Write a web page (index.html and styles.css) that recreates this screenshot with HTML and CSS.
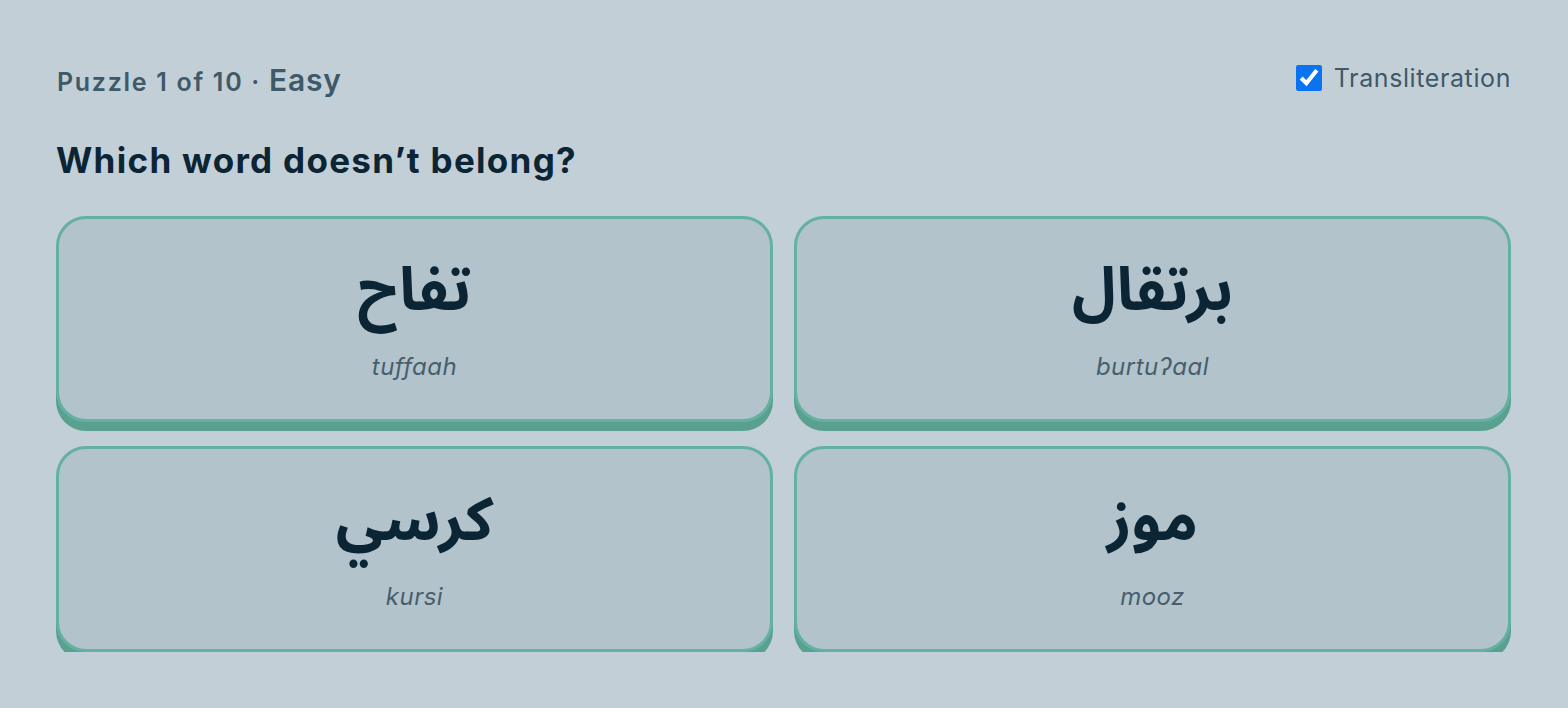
FILE: index.html
```html
<!DOCTYPE html>
<html>
    <head>
        <title>Odd one out</title>
        <link rel="stylesheet" href="styles.css">
    </head>
    <body>
        <div class="game">
            <div class="topbar">
                <div class="progress">Puzzle 1 of 10 · <span class="level">Easy</span></div>
                <label class="toggle">
                    <input type="checkbox" checked>
                    <span>Transliteration</span>
                </label>
            </div>
            <h1 class="question">Which word doesn’t belong?</h1>
            <div class="choices">
                <button class="choice">
                    <span class="word" lang="ar" dir="rtl">تفاح</span>
                    <span class="translit">tuffaah</span>
                </button>
                <button class="choice">
                    <span class="word" lang="ar" dir="rtl">برتقال</span>
                    <span class="translit">burtuʔaal</span>
                </button>
                <button class="choice">
                    <span class="word" lang="ar" dir="rtl">كرسي</span>
                    <span class="translit">kursi</span>
                </button>
                <button class="choice">
                    <span class="word" lang="ar" dir="rtl">موز</span>
                    <span class="translit">mooz</span>
                </button>
            </div>
        </div>
    </body>
</html>
```

FILE: styles.css
```css
body {
    margin: 0;
    background: #c3cfd7;
    font-family: Inter, "Open Sans", sans-serif;
    color: #0c2535;
}
.game {
    padding: 58px 57px 0 56px;
}
.topbar {
    display: flex;
    justify-content: space-between;
    align-items: center;
    height: 48px;
}
.progress {
    font-size: 25px;
    font-weight: 600;
    color: #3e5968;
    padding-left: 1px;
    margin-top: -4px;
    letter-spacing: 1.7px;
}
.level {
    font-size: 30px;
    font-weight: 600;
    letter-spacing: 0.8px;
}
.toggle {
    display: flex;
    align-items: center;
    gap: 12px;
    font-size: 25px;
    color: #3e5968;
    margin-top: -8px;
    letter-spacing: 0.6px;
}
.toggle input {
    width: 26px;
    height: 26px;
    margin: 0;
    accent-color: #0a74f0;
}
.question {
    margin: 34px 0 36px 0;
    font-size: 35px;
    font-weight: 700;
    line-height: 40px;
    letter-spacing: 1.3px;
}
.choices {
    display: grid;
    grid-template-columns: 1fr 1fr;
    column-gap: 21px;
    row-gap: 24px;
}
.choice {
    height: 206px;
    display: flex;
    flex-direction: column;
    align-items: center;
    justify-content: center;
    background: #b3c3cb;
    border: 3px solid #62b1a1;
    border-radius: 30px;
    box-shadow: 0 9px 0 #59a08f;
    font-family: inherit;
    padding: 0 0 0 0;
    color: inherit;
}
.word {
    font-family: "Noto Sans Arabic", "DejaVu Sans", sans-serif;
    font-size: 60px;
    font-weight: 700;
    line-height: 70px;
    color: #0c2535;
}
.translit {
    font-size: 24px;
    font-style: italic;
    line-height: 30px;
    color: #465f6d;
    margin-top: 26px;
    letter-spacing: 0.5px;
}
```
